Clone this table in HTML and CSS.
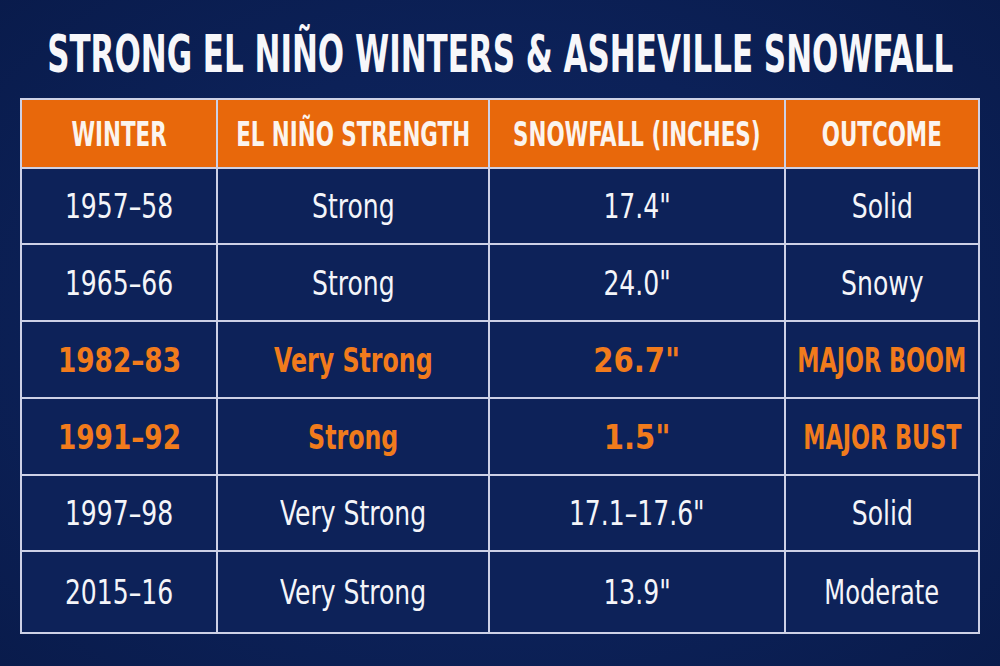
FILE: index.html
```html
<!DOCTYPE html>
<html lang="en">
<head>
<meta charset="utf-8">
<title>Strong El Niño Winters &amp; Asheville Snowfall</title>
<link rel="stylesheet" href="styles.css">
</head>
<body>
<main class="page">
  <h1 class="title"><span class="squeeze">STRONG EL NIÑO WINTERS &amp; ASHEVILLE SNOWFALL</span></h1>
  <div class="table">
    <div class="cell head"><span class="sq">WINTER</span></div>
    <div class="cell head"><span class="sq">EL NIÑO STRENGTH</span></div>
    <div class="cell head"><span class="sq">SNOWFALL (INCHES)</span></div>
    <div class="cell head"><span class="sq">OUTCOME</span></div>

    <div class="cell"><span class="sq">1957–58</span></div>
    <div class="cell"><span class="sq">Strong</span></div>
    <div class="cell"><span class="sq">17.4"</span></div>
    <div class="cell"><span class="sq">Solid</span></div>

    <div class="cell"><span class="sq">1965–66</span></div>
    <div class="cell"><span class="sq">Strong</span></div>
    <div class="cell"><span class="sq">24.0"</span></div>
    <div class="cell"><span class="sq">Snowy</span></div>

    <div class="cell hl"><span class="sq num">1982–83</span></div>
    <div class="cell hl"><span class="sq word">Very Strong</span></div>
    <div class="cell hl"><span class="sq num wide">26.7"</span></div>
    <div class="cell hl"><span class="sq caps">MAJOR BOOM</span></div>

    <div class="cell hl"><span class="sq num">1991–92</span></div>
    <div class="cell hl"><span class="sq word">Strong</span></div>
    <div class="cell hl"><span class="sq num wide">1.5"</span></div>
    <div class="cell hl"><span class="sq caps">MAJOR BUST</span></div>

    <div class="cell"><span class="sq">1997–98</span></div>
    <div class="cell"><span class="sq">Very Strong</span></div>
    <div class="cell"><span class="sq">17.1–17.6"</span></div>
    <div class="cell"><span class="sq">Solid</span></div>

    <div class="cell"><span class="sq">2015–16</span></div>
    <div class="cell"><span class="sq">Very Strong</span></div>
    <div class="cell"><span class="sq">13.9"</span></div>
    <div class="cell"><span class="sq narrow">Moderate</span></div>
  </div>
</main>
</body>
</html>
```

FILE: styles.css
```css
html, body {
  margin: 0;
  padding: 0;
}

body {
  width: 1000px;
  height: 666px;
  overflow: hidden;
  background: radial-gradient(ellipse 70% 75% at 50% 50%, #0f2662 0%, #0c2158 55%, #091b4b 100%);
  font-family: "DejaVu Sans Condensed", "DejaVu Sans", sans-serif;
  color: #f4f5f9;
}

.page {
  display: flex;
  flex-direction: column;
  align-items: center;
  padding-top: 29px;
}

.title {
  display: flex;
  justify-content: center;
  width: 1000px;
  margin: 0 0 18px;
  height: 51px;
  font-size: 51px;
  line-height: 51px;
  font-weight: bold;
  color: #f7f7fa;
  white-space: nowrap;
}

.squeeze {
  flex: none;
  transform: scaleX(0.675);
}

.table {
  display: grid;
  grid-template-columns: 194px 270px 294px 192px;
  grid-template-rows: 67px 74px 75px 75px 75px 74px 80px;
  gap: 2px;
  padding: 2px;
  background: #cdd1e6;
  width: 956px;
}

.cell {
  display: flex;
  align-items: center;
  justify-content: center;
  background: #0d2259;
  font-size: 34px;
  white-space: nowrap;
}

.sq {
  display: inline-block;
  transform: scaleX(0.82);
}

.sq.narrow {
  transform: scaleX(0.79);
}

.head {
  background: #e8680b;
  font-weight: bold;
  color: #fbf4ee;
}

.head .sq {
  transform: scaleX(0.70);
}

.hl {
  font-weight: bold;
  color: #f17b1c;
}

.hl .num {
  transform: scaleX(0.86);
}

.hl .num.wide {
  transform: scaleX(0.95);
}

.hl .word {
  transform: scaleX(0.775);
}

.hl .caps {
  transform: scaleX(0.73);
}
```
